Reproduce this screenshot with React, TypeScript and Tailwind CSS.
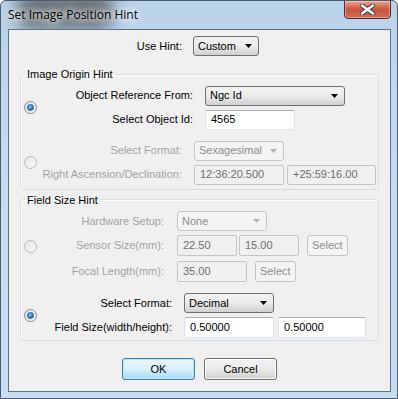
import React from 'react';

const FONT = 'font-["Tahoma","Liberation_Sans",sans-serif] text-[11px]';

function Radio({ checked, disabled }: { checked?: boolean; disabled?: boolean }) {
  return (
    <div
      className={`w-[13px] h-[13px] rounded-full border flex items-center justify-center shrink-0 ${
        disabled ? 'border-[#b8b8b8] bg-gradient-to-br from-[#e6e6e6] to-[#f8f8f8]' : 'border-[#8a8a8a] bg-gradient-to-br from-[#dcdcdc] to-[#fdfdfd]'
      }`}
    >
      {checked && (
        <div className="w-[7px] h-[7px] rounded-full bg-[radial-gradient(circle_at_40%_35%,#7fd0f7_0%,#1a8bd0_55%,#0c4f86_100%)] border border-[#1a5b8c]" />
      )}
    </div>
  );
}

function Arrow({ disabled }: { disabled?: boolean }) {
  return (
    <svg width="7" height="4" viewBox="0 0 7 4" className="shrink-0">
      <path d="M0 0H7L3.5 4Z" fill={disabled ? '#b0b0b0' : '#000'} />
    </svg>
  );
}

function Combo({ value, w, h = 'h-[20px]', disabled }: { value: string; w: string; h?: string; disabled?: boolean }) {
  return (
    <div
      className={`${w} ${h} rounded-[3px] border flex items-center justify-between pl-[4px] pr-[6px] ${
        disabled
          ? 'border-[#c5c5c5] bg-[#f4f4f4] text-[#8d8d8d]'
          : 'border-[#707070] bg-gradient-to-b from-[#f2f2f2] via-[#ebebeb] to-[#d0d0d0] text-black'
      }`}
    >
      <span>{value}</span>
      <Arrow disabled={disabled} />
    </div>
  );
}

function Field({ value, w, h = 'h-[20px]', disabled }: { value: string; w: string; h?: string; disabled?: boolean }) {
  return (
    <div
      className={`${w} ${h} rounded-[2px] border flex items-center px-[5px] ${
        disabled
          ? 'border-[#c5c5c5] bg-[#f0f0f0] text-[#6d6d6d]'
          : 'border-[#abadb3] border-l-[#dbdfe6] border-r-[#dbdfe6] border-b-[#e3e9ef] bg-white text-black'
      }`}
    >
      {value}
    </div>
  );
}

function SmallButton({ label }: { label: string }) {
  return (
    <div className="h-[21px] px-[4px] rounded-[3px] border border-[#c5c5c5] bg-[#f4f4f4] text-[#8d8d8d] flex items-center">
      {label}
    </div>
  );
}

function Label({ text, w, disabled }: { text: string; w: string; disabled?: boolean }) {
  return <div className={`${w} text-right shrink-0 ${disabled ? 'text-[#a3a3a3]' : 'text-black'}`}>{text}</div>;
}

function Group({ title, children, className }: { title: string; children: React.ReactNode; className?: string }) {
  return (
    <fieldset className={`mx-[11px] border border-[#d5dfe5] rounded-[3px] shadow-[inset_1px_1px_0_#fff] ${className ?? ''}`}>
      <legend className="ml-[4px] px-[2px] text-black">{title}</legend>
      {children}
    </fieldset>
  );
}

export default function App() {
  return (
    <div className={`w-[398px] h-[399px] relative overflow-hidden ${FONT} bg-gradient-to-b from-[#bad3ea] via-[#c8dcf0] to-[#c9def2] border border-[#4b5c6e] rounded-t-[6px]`}>
      {/* title bar */}
      <div className="h-[28px] relative">
        <div className="absolute left-[14px] top-[-6px] w-[100px] h-[34px] bg-[#3a3a3a] opacity-70 blur-[8px] rounded-full" />
        <div className="absolute left-[7px] top-[5px] text-[12px] text-black font-['Open_Sans','Liberation_Sans',sans-serif] [text-shadow:0_0_6px_#fff,0_0_10px_#fff,0_0_12px_#fff]">
          Set Image Position Hint
        </div>
        <div className="absolute left-[343px] top-[-1px] w-[47px] h-[19px] rounded-b-[4px] border border-[#5a2420] bg-gradient-to-b from-[#e8a493] via-[#c8533f] to-[#d26a55] flex items-center justify-center shadow-[inset_0_0_0_1px_rgba(255,255,255,0.35)]">
          <svg width="15" height="11" viewBox="0 0 15 11">
            <path d="M2 1.5L13 9.5M13 1.5L2 9.5" stroke="#3a3a3a" strokeWidth="4.5" strokeLinecap="round" />
            <path d="M2 1.5L13 9.5M13 1.5L2 9.5" stroke="#fff" strokeWidth="2.6" strokeLinecap="round" />
          </svg>
        </div>
      </div>

      {/* client area */}
      <div className="absolute left-[7px] top-[28px] w-[383px] h-[363px] bg-[#f0f0f0] border border-[#5f7387] flex flex-col">
        {/* use hint */}
        <div className="flex items-center mt-[6px] h-[20px]">
          <Label text="Use Hint:" w="w-[173px]" />
          <div className="ml-[11px]">
            <Combo value="Custom" w="w-[66px]" />
          </div>
        </div>

        <Group title="Image Origin Hint" className="mt-[10px] pb-[4px]">
          <div className="flex items-center mt-[3px]">
            <div className="ml-[3px]"><Radio checked /></div>
            <div className="flex flex-col gap-[4px]">
              <div className="flex items-center gap-[12px]">
                <Label text="Object Reference From:" w="w-[156px]" />
                <Combo value="Ngc Id" w="w-[140px]" />
              </div>
              <div className="flex items-center gap-[12px]">
                <Label text="Select Object Id:" w="w-[156px]" />
                <Field value="4565" w="w-[90px]" />
              </div>
            </div>
          </div>
          <div className="flex items-center mt-[11px]">
            <div className="ml-[3px]"><Radio disabled /></div>
            <div className="flex flex-col gap-[4px]">
              <div className="flex items-center gap-[12px]">
                <Label text="Select Format:" w="w-[145px]" disabled />
                <Combo value="Sexagesimal" w="w-[90px]" disabled />
              </div>
              <div className="flex items-center gap-[12px]">
                <Label text="Right Ascension/Declination:" w="w-[145px]" disabled />
                <div className="flex gap-[3px]">
                  <Field value="12:36:20.500" w="w-[90px]" disabled />
                  <Field value="+25:59:16.00" w="w-[89px]" disabled />
                </div>
              </div>
            </div>
          </div>
        </Group>

        <Group title="Field Size Hint" className="mt-[2px] pb-[2px]">
          <div className="flex items-center mt-[3px]">
            <div className="ml-[3px]"><Radio disabled /></div>
            <div className="flex flex-col gap-[4px]">
              <div className="flex items-center gap-[13px]">
                <Label text="Hardware Setup:" w="w-[127px]" disabled />
                <Combo value="None" w="w-[90px]" disabled />
              </div>
              <div className="flex items-center gap-[13px]">
                <Label text="Sensor Size(mm):" w="w-[127px]" disabled />
                <div className="flex items-center">
                  <Field value="22.50" w="w-[60px]" h="h-[21px]" disabled />
                  <div className="ml-[2px]"><Field value="15.00" w="w-[60px]" h="h-[21px]" disabled /></div>
                  <div className="ml-[8px]"><SmallButton label="Select" /></div>
                </div>
              </div>
              <div className="flex items-center gap-[13px] mt-[1px]">
                <Label text="Focal Length(mm):" w="w-[127px]" disabled />
                <div className="flex items-center">
                  <Field value="35.00" w="w-[70px]" h="h-[21px]" disabled />
                  <div className="ml-[8px]"><SmallButton label="Select" /></div>
                </div>
              </div>
            </div>
          </div>
          <div className="flex items-center mt-[11px]">
            <div className="ml-[3px]"><Radio checked /></div>
            <div className="flex flex-col gap-[4px]">
              <div className="flex items-center gap-[12px]">
                <Label text="Select Format:" w="w-[135px]" />
                <Combo value="Decimal" w="w-[90px]" />
              </div>
              <div className="flex items-center gap-[12px]">
                <Label text="Field Size(width/height):" w="w-[135px]" />
                <div className="flex gap-[4px]">
                  <Field value="0.50000" w="w-[90px]" h="h-[21px]" />
                  <Field value="0.50000" w="w-[88px]" h="h-[21px]" />
                </div>
              </div>
            </div>
          </div>
        </Group>

        {/* buttons */}
        <div className="flex justify-center gap-[9px] mt-[17px]">
          <div className="w-[73px] h-[22px] rounded-[3px] border border-[#3c7fb1] bg-gradient-to-b from-[#eaf6fd] via-[#d9f0fc] to-[#a7d9f5] shadow-[inset_0_0_0_1px_#bde6fd] flex items-center justify-center text-black">
            OK
          </div>
          <div className="w-[73px] h-[22px] rounded-[3px] border border-[#707070] bg-gradient-to-b from-[#f2f2f2] via-[#ebebeb] to-[#cfcfcf] shadow-[inset_0_0_0_1px_#fcfcfc] flex items-center justify-center text-black">
            Cancel
          </div>
        </div>
      </div>
    </div>
  );
}
